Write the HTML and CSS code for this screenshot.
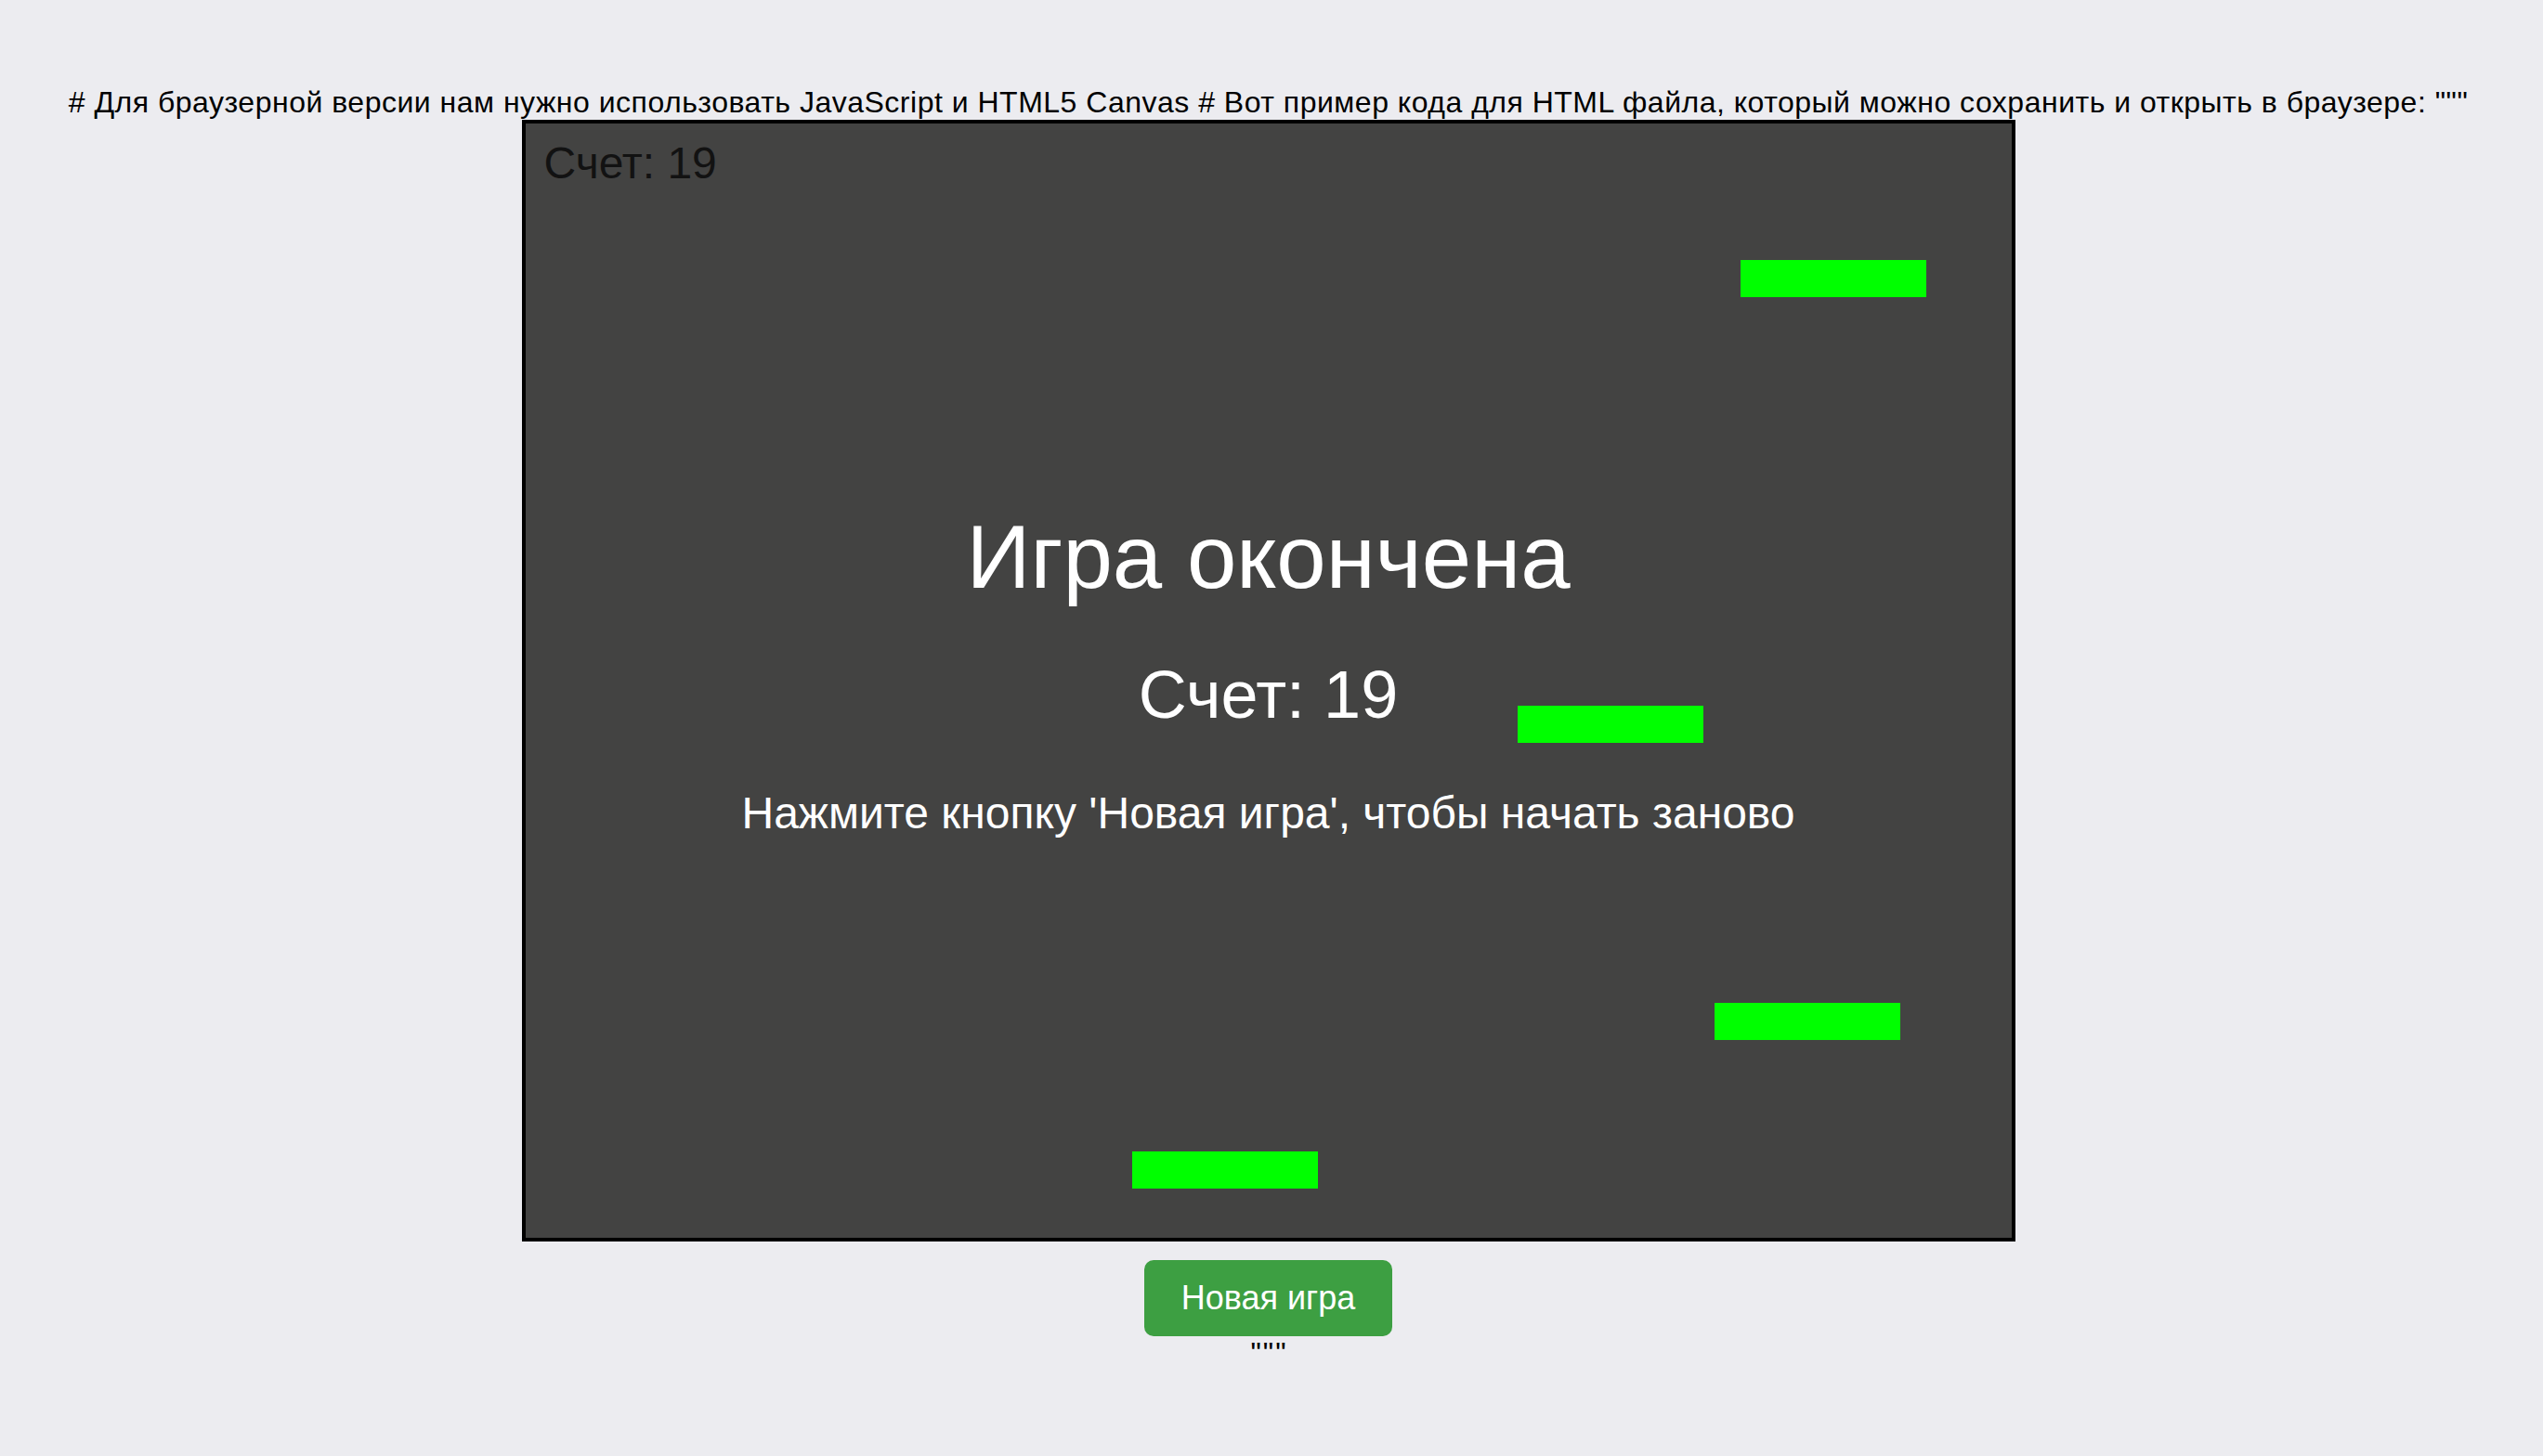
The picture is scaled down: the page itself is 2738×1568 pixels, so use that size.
FILE: index.html
```html
<!DOCTYPE html>
<html lang="ru">
<head>
<meta charset="utf-8">
<title>Игра</title>
<link rel="stylesheet" href="styles.css">
</head>
<body>
<div class="intro"># Для браузерной версии нам нужно использовать JavaScript и HTML5 Canvas # Вот пример кода для HTML файла, который можно сохранить и открыть в браузере: """</div>
<div class="game">
  <div class="hud-score">Счет: 19</div>
  <div class="platform" style="left:1308px; top:147px"></div>
  <div class="platform" style="left:1068px; top:627px"></div>
  <div class="platform" style="left:1280px; top:947px"></div>
  <div class="platform" style="left:653px; top:1107px"></div>
  <div class="overlay">
    <div class="over-title">Игра окончена</div>
    <div class="over-score">Счет: 19</div>
    <div class="over-hint">Нажмите кнопку 'Новая игра', чтобы начать заново</div>
  </div>
</div>
<button class="new-game">Новая игра</button>
<div class="outro">"""</div>
</body>
</html>
```
FILE: styles.css
```css
html, body {
  margin: 0;
  padding: 0;
}
body {
  background: #ececf0;
  color: #000;
  font-family: "Liberation Sans", Arial, sans-serif;
  font-size: 32px;
  min-height: 100vh;
  padding-right: 7px;
  box-sizing: border-box;
  display: flex;
  flex-direction: column;
  align-items: center;
  justify-content: center;
}
.intro, .outro {
  margin: 0;
  line-height: normal;
  text-align: center;
  white-space: nowrap;
}
.intro {
  letter-spacing: 0.5px;
}
.outro {
  letter-spacing: 2px;
  padding-left: 2px;
}
.game {
  position: relative;
  width: 1600px;
  height: 1200px;
  border: 4px solid #000;
  background: #434342;
  overflow: hidden;
}
.hud-score {
  position: absolute;
  left: 20px;
  top: 19px;
  font-size: 48px;
  line-height: 1;
  color: #121212;
}
.platform {
  position: absolute;
  width: 200px;
  height: 40px;
  background: #00ff00;
}
.overlay {
  position: absolute;
  inset: 0;
  display: flex;
  flex-direction: column;
  align-items: center;
  padding-top: 419px;
  color: #fff;
}
.over-title {
  font-size: 96px;
  line-height: 1;
}
.over-score {
  font-size: 72px;
  line-height: 1;
  margin-top: 64px;
}
.over-hint {
  font-size: 48px;
  line-height: 1;
  margin-top: 68px;
}
.new-game {
  margin-top: 20px;
  padding: 20px 40px;
  font-family: "Liberation Sans", Arial, sans-serif;
  font-size: 36px;
  line-height: 1.15;
  color: #fff;
  background: #3d9f42;
  border: none;
  border-radius: 10px;
  cursor: pointer;
}
```
